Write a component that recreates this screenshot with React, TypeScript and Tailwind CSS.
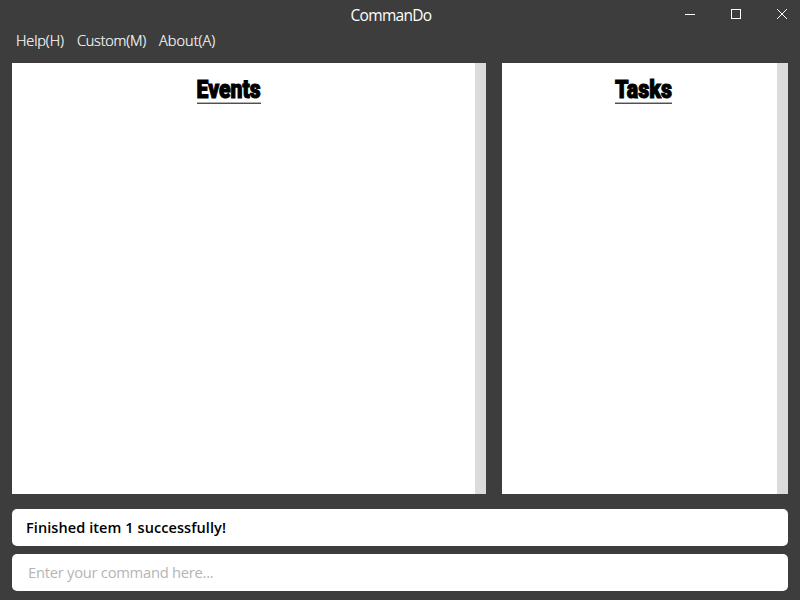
import React from "react";

const menus = [
  { label: "Help(H)", size: "w-[61px]", fit: "tracking-[-0.12px]" },
  { label: "Custom(M)", size: "w-[82px]", fit: "tracking-[-0.22px]" },
  { label: "About(A)", size: "w-[70px]", fit: "tracking-[0.06px]" },
];

function Pane({ title, className, underline, scale }: { title: string; className: string; underline: string; scale: string }) {
  return (
    <section className={`flex h-[431px] bg-white ${className}`}>
      <div className="flex flex-1 flex-col items-center pt-[11px]">
        <h2
          className={`flex h-[30px] justify-center border-b border-[#505050] font-['Roboto'] text-[26.5px] leading-[29px] font-black text-black shadow-[inset_0_-1px_0_#b0b0b0] ${underline}`}
        >
          <span className={`block whitespace-nowrap [-webkit-text-stroke:1.1px_black] ${scale}`}>{title}</span>
        </h2>
      </div>
      <div className="w-[11px] bg-[#dbdbdb]" />
    </section>
  );
}

export default function App() {
  return (
    <div className="flex h-[600px] w-[800px] flex-col overflow-hidden bg-[#3d3d3d] font-['Open_Sans','Noto_Sans',sans-serif]">
      <header className="flex h-[30px] shrink-0">
        <div className="w-[115px]" />
        <h1 className="flex-1 pt-[6px] text-center text-[15.5px] leading-[19px] tracking-[-0.7px] text-white">CommanDo</h1>
        <div className="flex w-[133px] gap-9 pt-[9px]">
          <svg width="10" height="10" viewBox="0 0 10 10" shapeRendering="crispEdges" className="ml-[18px]">
            <path d="M0 5.5H10" stroke="white" />
          </svg>
          <svg width="10" height="10" viewBox="0 0 10 10" shapeRendering="crispEdges">
            <path d="M.5 .5H9.5V9.5H.5Z" fill="none" stroke="white" />
          </svg>
          <svg width="10" height="10" viewBox="0 0 10 10">
            <path d="M0 0L10 10M10 0L0 10" stroke="white" />
          </svg>
        </div>
      </header>
      <nav className="flex h-[33px] shrink-0 pl-4 text-[14.5px] leading-[22px] font-light text-white [-webkit-text-stroke:0.2px_white]">
        {menus.map((m) => (
          <span key={m.label} className={`whitespace-nowrap ${m.size} ${m.fit}`}>
            {m.label}
          </span>
        ))}
      </nav>
      <main className="flex gap-4 px-3">
        <Pane title="Events" className="w-[474px]" underline="w-[64px] -translate-x-[15px]" scale="translate-x-[0.6px] scale-x-[0.8]" />
        <Pane title="Tasks" className="w-[286px]" underline="w-[57px] translate-x-1" scale="translate-x-[0.4px] scale-x-[0.81]" />
      </main>
      <footer className="flex flex-col gap-2 px-3 pt-[15px]">
        <div className="h-[37px] rounded-[5px] bg-white pl-[14px] text-[14.5px] leading-[38px] font-[550] tracking-[0.08px] text-black">
          <span>Finished item 1 successfully!</span>
        </div>
        <input
          className="h-[37px] rounded-[5px] bg-white pb-[1px] pl-4 text-[14.75px] tracking-[-0.27px] text-black outline-none placeholder:text-[#b5b5b5]"
          placeholder="Enter your command here..."
        />
      </footer>
    </div>
  );
}
